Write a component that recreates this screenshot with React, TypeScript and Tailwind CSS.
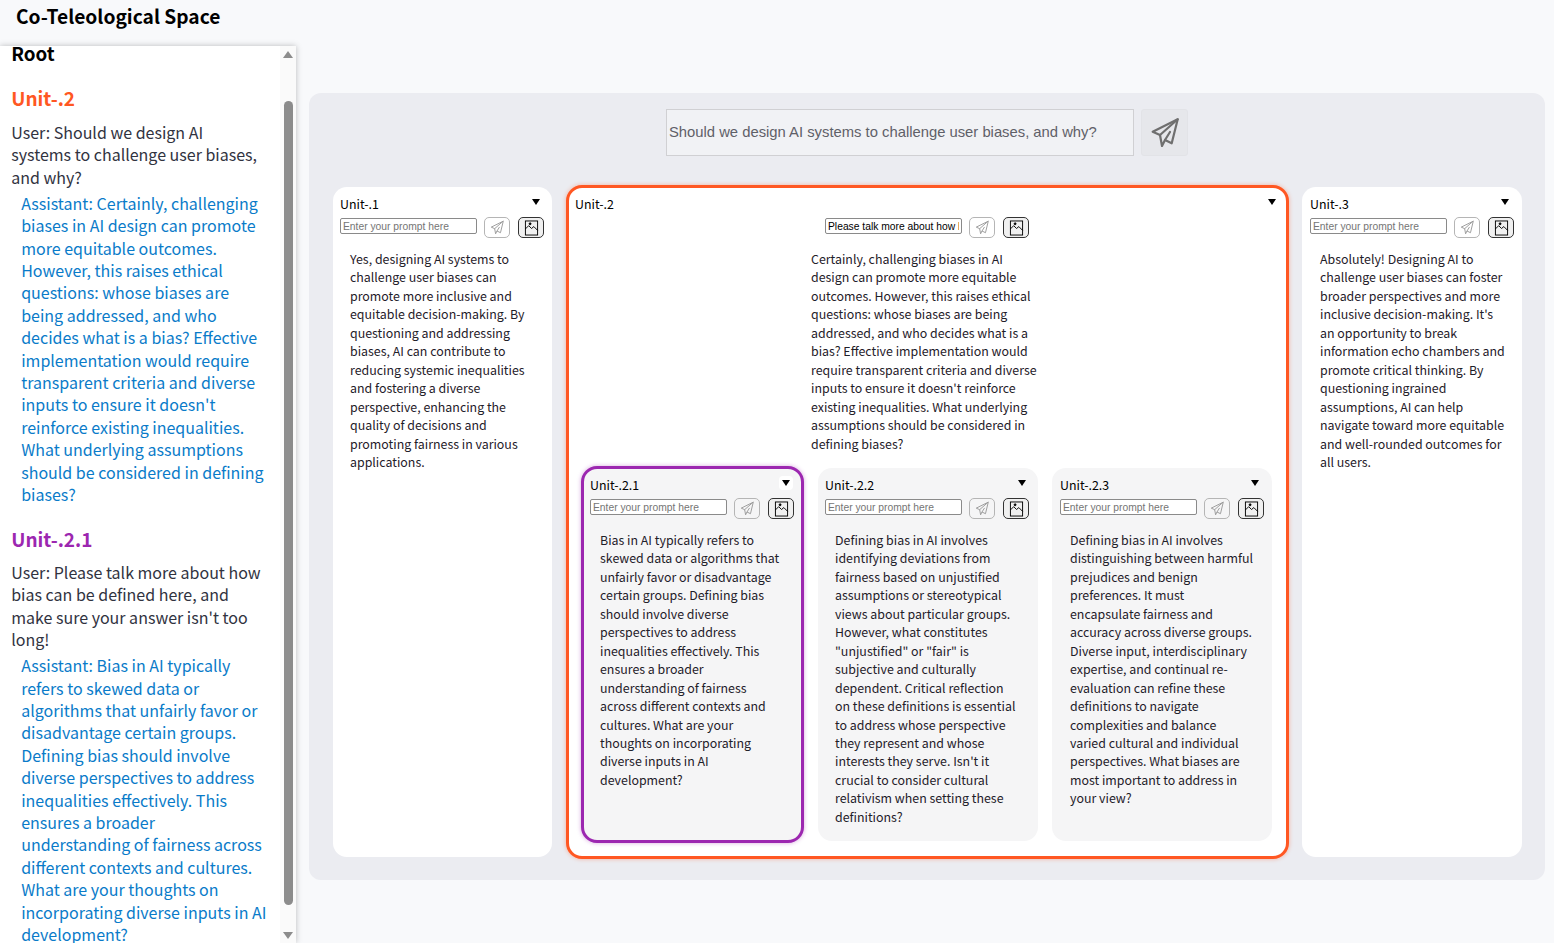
import React from "react";

const SANS = "font-['Noto_Sans_CJK_SC','Lato',sans-serif]";

function Plane({ className, sw = 2 }: { className: string; sw?: number }) {
  return (
    <svg viewBox="10 7 30 31" fill="none" stroke="currentColor" strokeWidth={sw} strokeLinejoin="round" strokeLinecap="round" className={className}>
      <path d="M37.7 9.3 12.7 21.7 20 25l2 11 3-6 6.7 3.3z" />
      <path d="M37.7 9.3 20 25M25 30l5-8" />
    </svg>
  );
}

function Pic({ className }: { className: string }) {
  return (
    <svg viewBox="0 0 16 16" fill="none" stroke="currentColor" strokeWidth="1" className={className}>
      <rect x="1.5" y="0.5" width="13" height="15" />
      <circle cx="6.5" cy="3.5" r="1" fill="currentColor" />
      <path d="M1.5 9 5 5.5l3 3 2.5-2 4 4" />
    </svg>
  );
}

function Lines({ lines }: { lines: string[] }) {
  return (
    <>
      {lines.map((l, i) => (
        <div key={i} className="whitespace-nowrap">{l}</div>
      ))}
    </>
  );
}

function Controls({ placeholder, value }: { placeholder?: string; value?: string }) {
  return (
    <div className="flex items-start h-[22px]">
      <input
        readOnly
        value={value ?? ""}
        placeholder={placeholder}
        className="w-[137px] mt-[1px] h-[16px] border border-[#8a8a8a] rounded-[2px] bg-white px-[2px] text-[10.3px] leading-[14px] font-['Liberation_Sans',sans-serif] text-black placeholder:text-[#757575] outline-none"
      />
      <div className="ml-[7px] w-[26px] h-[21px] border border-[#b5b5b5] rounded-[5px] flex items-center justify-center text-[#999]">
        <Plane className="w-[14px] h-[15px]" />
      </div>
      <div className="ml-[8px] w-[26px] h-[21px] border border-[#333] rounded-[5px] bg-[#f0f0f0] flex items-center justify-center text-black">
        <Pic className="w-[15px] h-[16px]" />
      </div>
    </div>
  );
}

function Caret({ boxed }: { boxed?: boolean }) {
  return (
    <div className={`w-[14px] h-[14px] -mt-[4px] flex items-center justify-center rounded-[4px] ${boxed ? "bg-white" : ""}`}>
      <div className="w-0 h-0 border-l-[4.5px] border-r-[4.5px] border-t-[6px] border-l-transparent border-r-transparent border-t-black" />
    </div>
  );
}

function Card({
  title, lines, className, boxed,
}: {
  title: string; lines: string[]; className: string; boxed?: boolean;
}) {
  return (
    <div className={`text-[12.4px] leading-[18.45px] text-[#1f2029] ${className}`}>
      <div className="flex items-center justify-between h-[16px] pr-[2px] text-black"><span>{title}</span><Caret boxed={boxed} /></div>
      <div className="mt-[5px]"><Controls placeholder="Enter your prompt here" /></div>
      <div className="mt-[11px] pl-[10px]"><Lines lines={lines} /></div>
    </div>
  );
}

const sidebarA1 = ["Assistant: Certainly, challenging", "biases in AI design can promote", "more equitable outcomes.", "However, this raises ethical", "questions: whose biases are", "being addressed, and who", "decides what is a bias? Effective", "implementation would require", "transparent criteria and diverse", "inputs to ensure it doesn't", "reinforce existing inequalities.", "What underlying assumptions", "should be considered in defining", "biases?"];
const sidebarA2 = ["Assistant: Bias in AI typically", "refers to skewed data or", "algorithms that unfairly favor or", "disadvantage certain groups.", "Defining bias should involve", "diverse perspectives to address", "inequalities effectively. This", "ensures a broader", "understanding of fairness across", "different contexts and cultures.", "What are your thoughts on", "incorporating diverse inputs in AI", "development?"];

const unit1 = ["Yes, designing AI systems to", "challenge user biases can", "promote more inclusive and", "equitable decision-making. By", "questioning and addressing", "biases, AI can contribute to", "reducing systemic inequalities", "and fostering a diverse", "perspective, enhancing the", "quality of decisions and", "promoting fairness in various", "applications."];
const unit2 = ["Certainly, challenging biases in AI", "design can promote more equitable", "outcomes. However, this raises ethical", "questions: whose biases are being", "addressed, and who decides what is a", "bias? Effective implementation would", "require transparent criteria and diverse", "inputs to ensure it doesn't reinforce", "existing inequalities. What underlying", "assumptions should be considered in", "defining biases?"];
const unit3 = ["Absolutely! Designing AI to", "challenge user biases can foster", "broader perspectives and more", "inclusive decision-making. It's", "an opportunity to break", "information echo chambers and", "promote critical thinking. By", "questioning ingrained", "assumptions, AI can help", "navigate toward more equitable", "and well-rounded outcomes for", "all users."];
const unit21 = ["Bias in AI typically refers to", "skewed data or algorithms that", "unfairly favor or disadvantage", "certain groups. Defining bias", "should involve diverse", "perspectives to address", "inequalities effectively. This", "ensures a broader", "understanding of fairness", "across different contexts and", "cultures. What are your", "thoughts on incorporating", "diverse inputs in AI", "development?"];
const unit22 = ["Defining bias in AI involves", "identifying deviations from", "fairness based on unjustified", "assumptions or stereotypical", "views about particular groups.", "However, what constitutes", "\"unjustified\" or \"fair\" is", "subjective and culturally", "dependent. Critical reflection", "on these definitions is essential", "to address whose perspective", "they represent and whose", "interests they serve. Isn't it", "crucial to consider cultural", "relativism when setting these", "definitions?"];
const unit23 = ["Defining bias in AI involves", "distinguishing between harmful", "prejudices and benign", "preferences. It must", "encapsulate fairness and", "accuracy across diverse groups.", "Diverse input, interdisciplinary", "expertise, and continual re-", "evaluation can refine these", "definitions to navigate", "complexities and balance", "varied cultural and individual", "perspectives. What biases are", "most important to address in", "your view?"];

export default function App() {
  return (
    <div className={`h-[943px] overflow-hidden bg-[#f8f9fb] ${SANS}`}>
      <div className="h-[46px] pl-[16px] pt-[2px] text-[19.2px] leading-[28px] font-bold text-black">Co-Teleological Space</div>
      <div className="flex h-[897px]">
        <aside className="relative w-[296px] h-full bg-white shadow-[0_0_6px_rgba(0,0,0,0.25)] overflow-hidden text-[16px] leading-[22.4px] text-[#31333f]">
          <div className="pl-[11.2px] -mt-[6px]">
            <div className="text-[18.8px] leading-[26px] font-bold text-black">Root</div>
            <div className="mt-[19px] text-[19px] leading-[26px] font-bold text-[#ff5722]">Unit-.2</div>
            <div className="mt-[10px]"><Lines lines={["User: Should we design AI", "systems to challenge user biases,", "and why?"]} /></div>
            <div className="mt-[3.6px] pl-[10px] text-[#0a7bc9]"><Lines lines={sidebarA1} /></div>
            <div className="mt-[20px] text-[19px] leading-[26px] font-bold text-[#9c27b0]">Unit-.2.1</div>
            <div className="mt-[9.4px]"><Lines lines={["User: Please talk more about how", "bias can be defined here, and", "make sure your answer isn't too", "long!"]} /></div>
            <div className="mt-[3.6px] pl-[10px] text-[#0a7bc9]"><Lines lines={sidebarA2} /></div>
          </div>
          <div className="absolute right-0 top-0 bottom-0 w-[16px] bg-[#fafafa]">
            <div className="absolute left-[3px] top-[5px] w-0 h-0 border-l-[5px] border-r-[5px] border-b-[7px] border-l-transparent border-r-transparent border-b-[#8c8c8c]" />
            <div className="absolute left-[4px] top-[55px] w-[9px] h-[804px] rounded-[5px] bg-[#8c8c8c]" />
            <div className="absolute left-[3px] bottom-[4px] w-0 h-0 border-l-[5px] border-r-[5px] border-t-[7px] border-l-transparent border-r-transparent border-t-[#8c8c8c]" />
          </div>
        </aside>
        <main className="flex-1 pl-[13px] pr-[9px] pt-[47px]">
          <div className="h-[787px] rounded-[12px] bg-[#ebecf1] flex flex-col items-stretch">
            <div className="flex justify-center gap-[7px] pt-[16px]">
              <div className="w-[468px] h-[47px] border border-[#d0d0d3] bg-[#f1f2f5] pl-[2px] flex items-center text-[14.8px] font-['Liberation_Sans',sans-serif] text-[#5f6068]">Should we design AI systems to challenge user biases, and why?</div>
              <div className="w-[47px] h-[47px] border border-[#e2e3e7] rounded-[3px] bg-[#e6e7eb] flex items-center justify-center text-[#6f6f6f]">
                <Plane className="w-[30px] h-[31px]" sw={2.2} />
              </div>
            </div>
            <div className="flex items-start pl-[24px] mt-[29px]">
              <Card title="Unit-.1" lines={unit1} className="w-[219px] h-[670px] rounded-[14px] px-[7px] pt-[9px] bg-white mt-[2px]" />
              <div className="ml-[14px] w-[723px] h-[674px] rounded-[16px] border-[3px] border-[#ff5722] bg-white shadow-[0_0_4px_rgba(255,87,34,0.4)] px-[12px] pt-[8px]">
                <div className="flex items-center justify-between h-[16px] -ml-[6px] -mr-[5px] text-[12.4px] text-black"><span>Unit-.2</span><Caret /></div>
                <div className="flex justify-center mt-[5px] pr-[1px]"><Controls value="Please talk more about how bias can be defined here" /></div>
                <div className="mt-[11px] pl-[230px] h-[216px] text-[12.4px] leading-[18.45px] text-[#1f2029]"><Lines lines={unit2} /></div>
                <div className="flex items-start gap-[14px]">
                  <Card title="Unit-.2.1" lines={unit21} boxed className="w-[223px] h-[377px] bg-[#f5f5f6] border-[3px] border-[#9c27b0] rounded-[16px] shadow-[0_0_4px_rgba(156,39,176,0.4)] px-[6px] pt-[8px]" />
                  <Card title="Unit-.2.2" lines={unit22} className="w-[220px] h-[373px] rounded-[14px] px-[7px] pt-[9px] bg-[#f5f5f6] mt-[2px]" />
                  <Card title="Unit-.2.3" lines={unit23} className="w-[220px] h-[373px] rounded-[14px] px-[8px] pt-[9px] bg-[#f5f5f6] mt-[2px]" />
                </div>
              </div>
              <Card title="Unit-.3" lines={unit3} className="ml-[13px] w-[220px] h-[670px] rounded-[14px] px-[8px] pt-[9px] bg-white mt-[2px]" />
            </div>
          </div>
        </main>
      </div>
    </div>
  );
}
